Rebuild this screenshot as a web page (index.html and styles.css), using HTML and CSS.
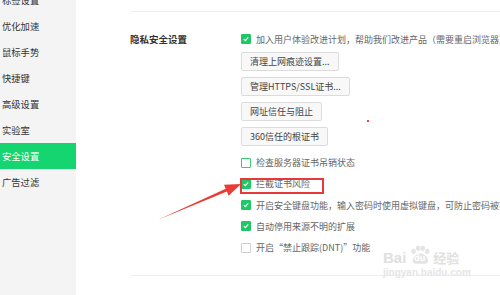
FILE: index.html
```html
<!DOCTYPE html>
<html lang="zh-CN">
<head>
<meta charset="utf-8">
<title>安全设置</title>
<link rel="stylesheet" href="styles.css">
</head>
<body>
<div class="page">
  <nav class="sidebar">
    <ul class="menu">
      <li class="menu-item">标签设置</li>
      <li class="menu-item">优化加速</li>
      <li class="menu-item">鼠标手势</li>
      <li class="menu-item">快捷键</li>
      <li class="menu-item">高级设置</li>
      <li class="menu-item">实验室</li>
      <li class="menu-item active">安全设置</li>
      <li class="menu-item">广告过滤</li>
    </ul>
  </nav>
  <main class="content">
    <div class="rule top-rule"></div>
    <section class="section">
      <div class="section-title">隐私安全设置</div>
      <div class="options">
        <label class="check-row first-row"><span class="box checked"><svg viewBox="0 0 10 10"><polyline points="2.2,5.2 4.2,7 7.8,3"/></svg></span><span class="check-text">加入用户体验改进计划，帮助我们改进产品（需要重启浏览器）</span></label>
        <div class="buttons">
          <button class="btn">清理上网痕迹设置...</button>
          <button class="btn">管理HTTPS/SSL证书...</button>
          <button class="btn">网址信任与阻止</button>
          <button class="btn">360信任的根证书</button>
        </div>
        <div class="check-list">
          <label class="check-row"><span class="box hover"></span><span class="check-text">检查服务器证书吊销状态</span></label>
          <label class="check-row"><span class="box checked"><svg viewBox="0 0 10 10"><polyline points="2.2,5.2 4.2,7 7.8,3"/></svg></span><span class="check-text">拦截证书风险</span></label>
          <label class="check-row"><span class="box checked"><svg viewBox="0 0 10 10"><polyline points="2.2,5.2 4.2,7 7.8,3"/></svg></span><span class="check-text">开启安全键盘功能，输入密码时使用虚拟键盘，可防止密码被窃取</span></label>
          <label class="check-row"><span class="box checked"><svg viewBox="0 0 10 10"><polyline points="2.2,5.2 4.2,7 7.8,3"/></svg></span><span class="check-text">自动停用来源不明的扩展</span></label>
          <label class="check-row"><span class="box"></span><span class="check-text">开启“禁止跟踪(DNT)”功能</span></label>
        </div>
      </div>
    </section>
    <div class="rule bottom-rule"></div>
  </main>

  <div class="watermark">
    <div class="wm-logo">
      <span class="wm-bai">Bai</span>
      <span class="wm-paw">
        <svg viewBox="0 0 24 22" class="paw-svg"><ellipse cx="5" cy="7" rx="2.4" ry="3"/><ellipse cx="10" cy="3.5" rx="2.4" ry="3"/><ellipse cx="15" cy="3.5" rx="2.4" ry="3"/><ellipse cx="20" cy="7" rx="2.4" ry="3"/><path d="M12.5 9 C8 9 3 15 4 18.5 C5 21.5 9 20.5 12.5 20.5 C16 20.5 20 21.5 21 18.5 C22 15 17 9 12.5 9 Z"/></svg>
        <span class="wm-du">du</span>
      </span>
      <span class="wm-jy">经验</span>
    </div>
    <div class="wm-url">jingyan.baidu.com</div>
  </div>

  <div class="highlight-box"></div>
  <div class="red-dot"></div>
  <svg class="arrow" viewBox="0 0 500 295" width="500" height="295">
    <polygon points="158,219.8 225.7,188.8 224,184.7 241,184 228.6,195.7 226.9,191.6"/>
  </svg>
</div>
</body>
</html>
```

FILE: styles.css
```css
* { box-sizing: border-box; }

html, body {
  margin: 0;
  padding: 0;
  background: #ffffff;
  overflow: hidden;
}

body {
  font-family: "Noto Sans CJK SC", "Noto Sans", sans-serif;
  font-size: 9px;
  color: #333;
}

.page {
  position: relative;
  display: flex;
  width: 500px;
  height: 295px;
  overflow: hidden;
}

.sidebar {
  width: 76px;
  flex: 0 0 76px;
  background: #f4f4f4;
  height: 100%;
}

.menu {
  list-style: none;
  margin: -13px 0 0 0;
  padding: 0;
}

.menu-item {
  height: 26px;
  line-height: 26px;
  padding-left: 2px;
  font-size: 9.3px;
  color: #333;
}

.menu-item.active {
  background: #14d56f;
  color: #ffffff;
}

.content {
  flex: 1;
  padding-left: 54px;
  min-width: 0;
}

.rule {
  border-top: 1px solid #efefef;
  width: 400px;
}

.top-rule { margin-top: 11px; }
.bottom-rule { margin-top: 17px; }

.section {
  display: flex;
  margin-top: 17px;
}

.section-title {
  width: 111px;
  flex: 0 0 111px;
  height: 20px;
  line-height: 20px;
  font-weight: bold;
  font-size: 9.5px;
  color: #333;
}

.options {
  display: flex;
  flex-direction: column;
  min-width: 0;
}

.check-row {
  display: flex;
  align-items: center;
  gap: 5px;
  height: 21.25px;
  white-space: nowrap;
  color: #666;
}

.first-row { height: 20px; }

.box {
  width: 10px;
  height: 10px;
  flex: 0 0 10px;
  border: 1px solid #cfcfcf;
  border-radius: 1px;
  background: #fff;
  display: flex;
}

.box.hover { border-color: #38cc74; }

.box.checked {
  background: #20c865;
  border-color: #20c865;
}

.box svg {
  width: 100%;
  height: 100%;
}

.box polyline {
  fill: none;
  stroke: #ffffff;
  stroke-width: 1.4;
}

.check-text { color: #666; }

.buttons {
  display: flex;
  flex-direction: column;
  align-items: flex-start;
  gap: 6px;
  margin-top: 3px;
}

.btn {
  height: 19px;
  padding: 0 8px;
  border: 1px solid #dcdcdc;
  border-radius: 2px;
  background: #f8f8f8;
  font-family: inherit;
  font-size: 9px;
  color: #444;
  line-height: 17px;
}

.check-list {
  display: flex;
  flex-direction: column;
  margin-top: 6px;
}

/* annotations drawn over the screenshot */
.highlight-box {
  position: absolute;
  left: 240px;
  top: 178px;
  width: 84px;
  height: 16px;
  border: 2px solid #e63a3a;
}

.red-dot {
  position: absolute;
  left: 367px;
  top: 120px;
  width: 2px;
  height: 2px;
  background: #e64545;
}

.arrow {
  position: absolute;
  left: 0;
  top: 0;
}

.arrow polygon { fill: #ea3b35; }

.watermark {
  position: absolute;
  left: 383px;
  top: 245px;
  color: #e2e2e2;
}

.wm-logo {
  display: flex;
  align-items: flex-end;
  height: 20px;
}

.wm-bai {
  font-family: "Liberation Sans", sans-serif;
  font-weight: bold;
  font-size: 15px;
  line-height: 15px;
  color: #e0e0e0;
}

.wm-paw {
  position: relative;
  width: 24px;
  height: 20px;
  margin-left: 2px;
}

.paw-svg {
  width: 24px;
  height: 20px;
  fill: #e4e4e4;
}

.wm-du {
  position: absolute;
  left: 6px;
  top: 8px;
  font-family: "Liberation Sans", sans-serif;
  font-weight: bold;
  font-size: 9px;
  line-height: 10px;
  color: #ffffff;
}

.wm-jy {
  font-size: 13px;
  line-height: 15px;
  font-weight: bold;
  margin-left: 1px;
  color: #e0e0e0;
}

.wm-url {
  font-family: "Liberation Sans", sans-serif;
  font-size: 10px;
  line-height: 12px;
  margin-top: 2px;
  color: #e6e6e6;
  font-weight: bold;
}
```
